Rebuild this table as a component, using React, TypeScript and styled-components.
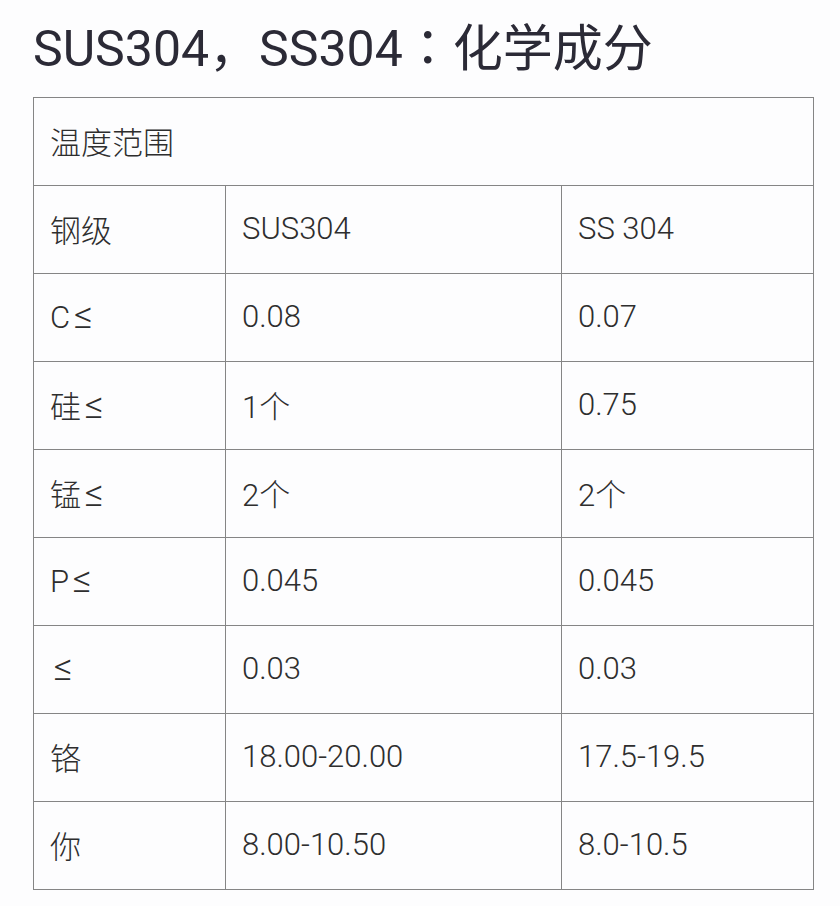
import React from "react";
import styled, { createGlobalStyle } from "styled-components";

const Global = createGlobalStyle`
  html, body {
    margin: 0;
    padding: 0;
    background: #fdfdfe;
  }
`;

const Page = styled.div`
  padding: 0 0 0 33px;
  font-family: Roboto, "Noto Sans CJK SC", sans-serif;
  color: #333;
`;

const Title = styled.h1`
  margin: 0;
  height: 97px;
  line-height: 88px;
  font-size: 50px;
  font-weight: 400;
  color: #2b2a36;
  letter-spacing: 0;
`;

const Punct = styled.span`
  font-family: "Noto Sans CJK KR", sans-serif;
`;

const Table = styled.table`
  border-collapse: collapse;
  width: 781px;
  table-layout: fixed;
`;

const Cell = styled.td`
  border: 1px solid #858585;
  height: 84px;
  padding: 0 16px 3px;
  font-size: 31px;
  font-weight: 300;
  color: #2e2e2e;
  vertical-align: middle;
  white-space: nowrap;
`;

const Sym = styled.span`
  margin-left: 4px;
  font-size: 37px;
  line-height: 1;
`;

const rows: [string, string, string][] = [
  ["钢级", "SUS304", "SS 304"],
  ["C≤", "0.08", "0.07"],
  ["硅≤", "1个", "0.75"],
  ["锰≤", "2个", "2个"],
  ["P≤", "0.045", "0.045"],
  ["≤", "0.03", "0.03"],
  ["铬", "18.00-20.00", "17.5-19.5"],
  ["你", "8.00-10.50", "8.0-10.5"],
];

const renderLabel = (s: string) => {
  if (!s.endsWith("≤")) return s;
  return (
    <>
      {s.slice(0, -1)}
      <Sym>≤</Sym>
    </>
  );
};

export default function App() {
  return (
    <>
      <Global />
      <Page>
        <Title>
          SUS304<Punct>，</Punct>SS304<Punct>：</Punct>化学成分
        </Title>
        <Table>
          <colgroup>
            <col style={{ width: 192 }} />
            <col style={{ width: 336 }} />
            <col style={{ width: 252 }} />
          </colgroup>
          <tbody>
            <tr>
              <Cell colSpan={3}>温度范围</Cell>
            </tr>
            {rows.map((r) => (
              <tr key={r[0]}>
                <Cell>{renderLabel(r[0])}</Cell>
                <Cell>{r[1]}</Cell>
                <Cell>{r[2]}</Cell>
              </tr>
            ))}
          </tbody>
        </Table>
      </Page>
    </>
  );
}
